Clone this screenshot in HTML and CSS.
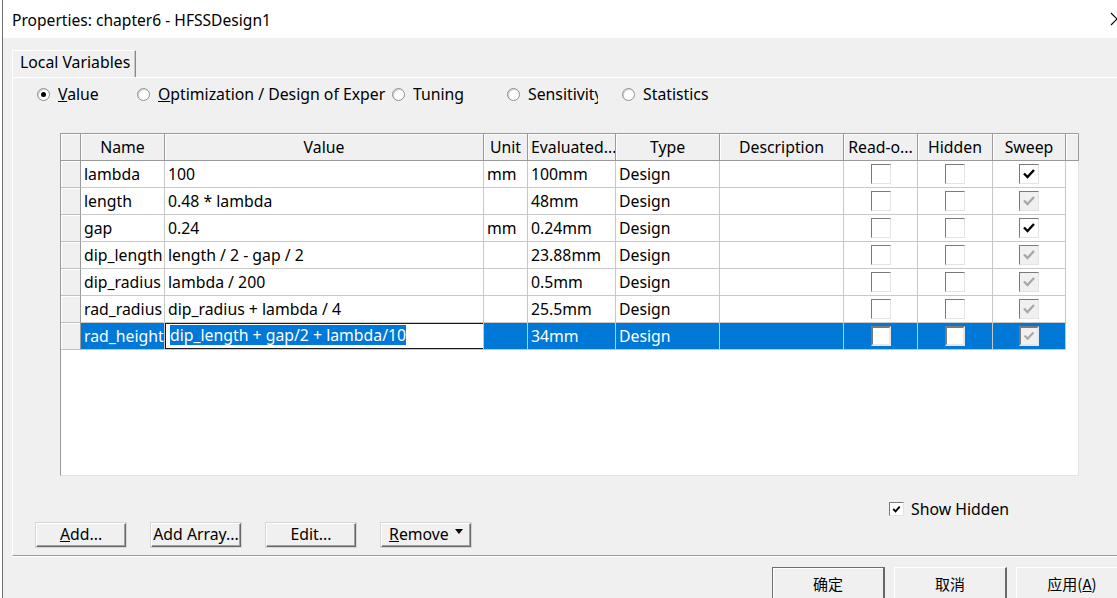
FILE: index.html
```html
<!DOCTYPE html>
<html>
<head>
<meta charset="utf-8">
<link rel="stylesheet" href="styles.css">
</head>
<body>
<div class="frame">
  <div class="titlebar">
    <span class="title">Properties: chapter6 - HFSSDesign1</span>
    <svg class="close" width="14" height="14" viewBox="0 0 14 14"><path d="M1 1 L13 13 M13 1 L1 13" stroke="#000" stroke-width="1.1" fill="none"/></svg>
  </div>
  <div class="client">
    <div class="tabs"><div class="tab">Local Variables</div></div>
    <div class="panel">
      <div class="radios">
        <div class="ritem w1"><span class="radio on"></span><span class="rlabel"><u>V</u>alue</span></div>
        <div class="ritem w2"><span class="radio"></span><span class="rlabel l2"><u>O</u>ptimization / Design of Exper</span></div>
        <div class="ritem w3"><span class="radio"></span><span class="rlabel">Tuning</span></div>
        <div class="ritem w3"><span class="radio"></span><span class="rlabel l4">Sensitivity</span></div>
        <div class="ritem"><span class="radio"></span><span class="rlabel">Statistics</span></div>
      </div>

      <div class="grid">
        <div class="row head">
          <div class="hc"></div>
          <div class="hc">Name</div>
          <div class="hc">Value</div>
          <div class="hc">Unit</div>
          <div class="hc left">Evaluated...</div>
          <div class="hc">Type</div>
          <div class="hc">Description</div>
          <div class="hc">Read-o...</div>
          <div class="hc">Hidden</div>
          <div class="hc">Sweep</div>
          <div class="hc"></div>
        </div>

        <div class="row">
          <div class="rh"></div><div class="c">lambda</div><div class="c">100</div><div class="c">mm</div><div class="c">100mm</div><div class="c">Design</div><div class="c"></div>
          <div class="c cc"><span class="cb"></span></div><div class="c cc"><span class="cb"></span></div>
          <div class="c cc"><span class="cb"><svg viewBox="0 0 18 18"><path d="M4 8.5 L7.5 12 L14 5" stroke="#000" stroke-width="2.4" fill="none"/></svg></span></div>
        </div>
        <div class="row">
          <div class="rh"></div><div class="c">length</div><div class="c">0.48 * lambda</div><div class="c"></div><div class="c">48mm</div><div class="c">Design</div><div class="c"></div>
          <div class="c cc"><span class="cb"></span></div><div class="c cc"><span class="cb"></span></div>
          <div class="c cc"><span class="cb dis"><svg viewBox="0 0 18 18"><path d="M4 8.5 L7.5 12 L14 5" stroke="#a8a8a8" stroke-width="2.4" fill="none"/></svg></span></div>
        </div>
        <div class="row">
          <div class="rh"></div><div class="c">gap</div><div class="c">0.24</div><div class="c">mm</div><div class="c">0.24mm</div><div class="c">Design</div><div class="c"></div>
          <div class="c cc"><span class="cb"></span></div><div class="c cc"><span class="cb"></span></div>
          <div class="c cc"><span class="cb"><svg viewBox="0 0 18 18"><path d="M4 8.5 L7.5 12 L14 5" stroke="#000" stroke-width="2.4" fill="none"/></svg></span></div>
        </div>
        <div class="row">
          <div class="rh"></div><div class="c">dip_length</div><div class="c">length / 2 - gap / 2</div><div class="c"></div><div class="c">23.88mm</div><div class="c">Design</div><div class="c"></div>
          <div class="c cc"><span class="cb"></span></div><div class="c cc"><span class="cb"></span></div>
          <div class="c cc"><span class="cb dis"><svg viewBox="0 0 18 18"><path d="M4 8.5 L7.5 12 L14 5" stroke="#a8a8a8" stroke-width="2.4" fill="none"/></svg></span></div>
        </div>
        <div class="row">
          <div class="rh"></div><div class="c">dip_radius</div><div class="c">lambda / 200</div><div class="c"></div><div class="c">0.5mm</div><div class="c">Design</div><div class="c"></div>
          <div class="c cc"><span class="cb"></span></div><div class="c cc"><span class="cb"></span></div>
          <div class="c cc"><span class="cb dis"><svg viewBox="0 0 18 18"><path d="M4 8.5 L7.5 12 L14 5" stroke="#a8a8a8" stroke-width="2.4" fill="none"/></svg></span></div>
        </div>
        <div class="row">
          <div class="rh"></div><div class="c">rad_radius</div><div class="c">dip_radius + lambda / 4</div><div class="c"></div><div class="c">25.5mm</div><div class="c">Design</div><div class="c"></div>
          <div class="c cc"><span class="cb"></span></div><div class="c cc"><span class="cb"></span></div>
          <div class="c cc"><span class="cb dis"><svg viewBox="0 0 18 18"><path d="M4 8.5 L7.5 12 L14 5" stroke="#a8a8a8" stroke-width="2.4" fill="none"/></svg></span></div>
        </div>
        <div class="row sel">
          <div class="rh"></div><div class="c">rad_height</div>
          <div class="c edcell"><div class="editor"><span class="hl">dip_length + gap/2 + lambda/10</span></div></div>
          <div class="c"></div><div class="c">34mm</div><div class="c">Design</div><div class="c"></div>
          <div class="c cc"><span class="cb selcb"></span></div><div class="c cc"><span class="cb selcb"></span></div>
          <div class="c cc"><span class="cb dis selcb"><svg viewBox="0 0 18 18"><path d="M4 8.5 L7.5 12 L14 5" stroke="#a8a8a8" stroke-width="2.4" fill="none"/></svg></span></div>
        </div>
      </div>

      <div class="showhidden">
        <span class="cb small"><svg viewBox="0 0 13 13"><path d="M3 6.5 L5.5 9 L10 4" stroke="#000" stroke-width="2" fill="none"/></svg></span>
        <span>Show Hidden</span>
      </div>

      <div class="btnrow">
        <div class="btn"><u>A</u>dd...</div>
        <div class="btn">Add Array...</div>
        <div class="btn">Edit...</div>
        <div class="btn"><u>R</u>emove <span class="tri"></span></div>
      </div>
    </div>

    <div class="dlgbtns">
      <div class="dbtn def">确定</div>
      <div class="dbtn">取消</div>
      <div class="dbtn">应用(<u>A</u>)</div>
    </div>
  </div>
</div>
</body>
</html>
```
FILE: styles.css
```css
html, body {
  margin: 0;
  padding: 0;
  background: #ffffff;
}
body {
  width: 1117px;
  height: 598px;
  overflow: hidden;
  font-family: "Noto Sans", "Noto Sans CJK SC", sans-serif;
  font-size: 15.8px;
  color: #000;
}
.frame {
  margin-left: 2px;
  border-left: 1px solid #6e6e6e;
  height: 598px;
  overflow: hidden;
  background: #f0f0f0;
}
.titlebar {
  height: 38px;
  background: #fff;
  display: flex;
  align-items: center;
  padding-left: 9px;
}
.title {
  font-size: 15.6px;
  margin-top: 1px;
}
.close {
  margin-left: auto;
  margin-right: -7px;
}
.client {
  padding-left: 9px;
}
.tabs {
  display: flex;
  padding-top: 12px;
}
.tab {
  height: 26px;
  width: 115px;
  padding-left: 7px;
  border-top: 1px solid #fff;
  border-left: 1px solid #fff;
  border-right: 1px solid #8a8a8a;
  line-height: 23px;
  box-shadow: inset -1px 0 0 #c8c8c8;
  white-space: nowrap;
}
.panel {
  width: 1200px;
  height: 477px;
  border-top: 1px solid #fff;
  border-left: 1px solid #fff;
  border-bottom: 1px solid #9a9a9a;
  box-shadow: 0 1px 0 #fff;
  box-sizing: content-box;
}
.radios {
  display: flex;
  align-items: center;
  padding-left: 24px;
  padding-top: 6px;
  height: 20px;
}
.ritem {
  display: flex;
  align-items: center;
  white-space: nowrap;
}
.w1 { width: 100px; }
.w2 { width: 255px; }
.w3 { width: 115px; }
.radio {
  width: 11px;
  height: 11px;
  border-radius: 50%;
  border: 1px solid #8f8f8f;
  background: #fff;
  position: relative;
  margin-right: 8px;
  flex: none;
  box-shadow: inset 1px 1px 0 #d0d0d0;
}
.radio.on::after {
  content: "";
  position: absolute;
  left: 3px;
  top: 3px;
  width: 5px;
  height: 5px;
  border-radius: 50%;
  background: #000;
}
.rlabel {
  line-height: 20px;
  overflow: hidden;
}
.l2 { width: 228px; }
.l4 { width: 70px; }

.grid {
  margin-top: 29px;
  margin-left: 47px;
  width: 1017px;
  height: 341px;
  border-left: 1px solid #9a9a9a;
  border-top: 1px solid #9a9a9a;
  border-right: 1px solid #e3e3e3;
  border-bottom: 1px solid #e3e3e3;
  background: #fff;
}
.row {
  display: grid;
  grid-template-columns: 20px 84px 319px 44px 88px 104px 124px 74px 75px 73px;
  height: 27px;
}
.row.head {
  grid-template-columns: 20px 84px 319px 44px 88px 104px 124px 74px 75px 73px 13px;
}
.hc {
  box-sizing: border-box;
  background: #f0f0f0;
  border-right: 1px solid #9a9a9a;
  border-bottom: 1px solid #9a9a9a;
  box-shadow: inset 1px 1px 0 #fff;
  text-align: center;
  line-height: 26px;
  white-space: nowrap;
  overflow: hidden;
}
.hc.left {
  text-align: left;
  padding-left: 3px;
}
.rh {
  box-sizing: border-box;
  background: #f0f0f0;
  border-right: 1px solid #9a9a9a;
  border-bottom: 1px solid #c0c0c0;
  box-shadow: inset 1px 1px 0 #fff;
}
.c {
  box-sizing: border-box;
  border-right: 1px solid #c8c8c8;
  border-bottom: 1px solid #c8c8c8;
  padding-left: 3px;
  line-height: 26px;
  white-space: nowrap;
  overflow: hidden;
}
.cc {
  display: flex;
  align-items: center;
  justify-content: center;
  padding-left: 0;
}
.cb {
  display: block;
  box-sizing: border-box;
  width: 20px;
  height: 20px;
  background: #fff;
  border-left: 1px solid #7a7a7a;
  border-top: 1px solid #7a7a7a;
  border-right: 1px solid #e3e3e3;
  border-bottom: 1px solid #e3e3e3;
  margin-top: -1px;
}
.cb svg {
  display: block;
  width: 18px;
  height: 18px;
}
.cb.dis {
  background: #f0f0f0;
}
.sel .c {
  background: #0078d7;
  color: #fff;
}
.sel .cb.selcb {
  border-left: 2px solid #7a7a7a;
  border-top: 2px solid #7a7a7a;
  border-right: 2px solid #e8e8e8;
  border-bottom: 2px solid #e8e8e8;
  background: #fff;
}
.sel .cb.selcb svg {
  width: 16px;
  height: 16px;
}
.sel .cb.dis.selcb {
  background: #f0f0f0;
}
.edcell {
  padding-left: 0;
}
.sel .edcell {
  background: #0078d7;
}
.editor {
  box-sizing: border-box;
  height: 26px;
  background: #fff;
  border: 1px solid #1a1a1a;
  padding-left: 4px;
  line-height: 23px;
  margin-right: -1px;
}
.hl {
  background: #0078d7;
  color: #fff;
  display: inline-block;
  line-height: 20px;
  margin-top: 1px;
}

.showhidden {
  display: flex;
  align-items: center;
  margin-top: 25px;
  margin-left: 876px;
  height: 16px;
}
.cb.small {
  width: 15px;
  height: 14px;
  margin-right: 7px;
  margin-top: 0;
  border-left: 1px solid #7a7a7a;
  border-top: 1px solid #7a7a7a;
}
.cb.small svg {
  width: 13px;
  height: 12px;
}
.btnrow {
  display: flex;
  gap: 25px;
  margin-top: 6px;
  margin-left: 23px;
}
.btn {
  box-sizing: border-box;
  width: 90px;
  height: 24px;
  background: #f0f0f0;
  border-top: 1px solid #fff;
  border-left: 1px solid #fff;
  border-right: 1px solid #696969;
  border-bottom: 1px solid #696969;
  box-shadow: inset -1px -1px 0 #a0a0a0, 0 0 0 1px #d6d6d6;
  text-align: center;
  line-height: 21px;
  white-space: nowrap;
}
.tri {
  display: inline-block;
  width: 0;
  height: 0;
  border-left: 4px solid transparent;
  border-right: 4px solid transparent;
  border-top: 5px solid #000;
  vertical-align: middle;
  margin-left: 2px;
  margin-top: -8px;
}
.dlgbtns {
  display: flex;
  margin-top: 11px;
  margin-left: 760px;
  gap: 9px;
}
.dbtn {
  box-sizing: border-box;
  flex: none;
  width: 113px;
  height: 34px;
  background: #f0f0f0;
  border-top: 1px solid #fff;
  border-left: 1px solid #fff;
  border-right: 2px solid #696969;
  border-bottom: 1px solid #696969;
  text-align: center;
  line-height: 32px;
  font-family: "Noto Sans CJK SC", "Noto Sans", sans-serif;
  font-size: 15px;
}
.dbtn.def {
  border-top: 1px solid #6e6e6e;
  border-left: 1px solid #6e6e6e;
  box-shadow: inset 1px 1px 0 #fff;
}
```
